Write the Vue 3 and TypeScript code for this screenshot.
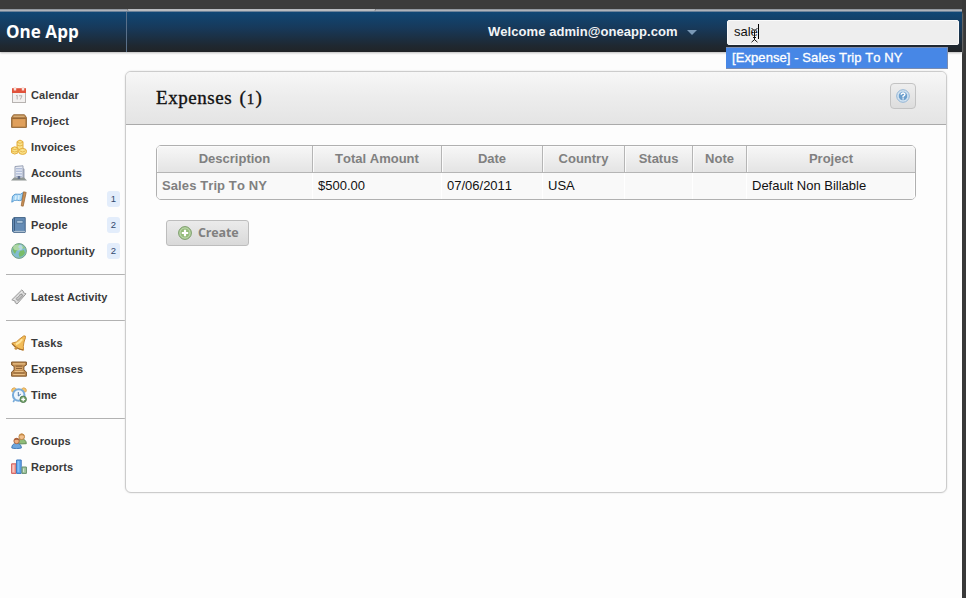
<script setup lang="ts">
import { ref } from 'vue'

interface NavItem {
  label: string
  icon: string
  count?: number
}

interface Column {
  label: string
  value: string
  width: number
}

const groups: NavItem[][] = [
  [
    { label: 'Calendar', icon: 'calendar' },
    { label: 'Project', icon: 'project' },
    { label: 'Invoices', icon: 'invoices' },
    { label: 'Accounts', icon: 'accounts' },
    { label: 'Milestones', icon: 'milestones', count: 1 },
    { label: 'People', icon: 'people', count: 2 },
    { label: 'Opportunity', icon: 'opportunity', count: 2 },
  ],
  [{ label: 'Latest Activity', icon: 'activity' }],
  [
    { label: 'Tasks', icon: 'tasks' },
    { label: 'Expenses', icon: 'expenses' },
    { label: 'Time', icon: 'time' },
  ],
  [
    { label: 'Groups', icon: 'groups' },
    { label: 'Reports', icon: 'reports' },
  ],
]

const columns: Column[] = [
  { label: 'Description', value: 'Sales Trip To NY', width: 156 },
  { label: 'Total Amount', value: '$500.00', width: 129 },
  { label: 'Date', value: '07/06/2011', width: 101 },
  { label: 'Country', value: 'USA', width: 82 },
  { label: 'Status', value: '', width: 68 },
  { label: 'Note', value: '', width: 54 },
  { label: 'Project', value: 'Default Non Billable', width: 168 },
]

const query = ref('sale')
</script>

<template>
  <div class="screen">
    <div class="chrome"></div>
    <div class="window">
      <div class="toolbar-edge"><span class="edge-tab"></span></div>
      <header class="topbar">
        <div class="brand">One App</div>
        <div class="account">
          <span>Welcome admin@oneapp.com</span>
          <span class="arrow"></span>
        </div>
        <div class="search">
          <div class="field">
            <span>{{ query }}</span><span class="caret"></span>
            <svg class="ibeam" width="9" height="16" viewBox="0 0 9 16" fill="none">
              <path d="M1.5 1L4.5 4L7.5 1M4.5 4V13M1.5 15.2L4.5 12.6L7.5 15.2M3 10.5H6" stroke="#fff" stroke-width="2" opacity=".6" />
              <path d="M1.5 1L4.5 4L7.5 1M4.5 4V13M1.5 15.2L4.5 12.6L7.5 15.2M3 10.5H6" stroke="#111" />
            </svg>
          </div>
          <div class="suggestion">[Expense] - Sales Trip To NY</div>
        </div>
      </header>

      <div class="body">
        <nav class="sidebar">
          <ul v-for="(group, g) in groups" :key="g" class="group">
            <li v-for="item in group" :key="item.label" class="item">
              <svg class="icon" width="16" height="16" viewBox="0 0 16 16">
                <g v-if="item.icon === 'calendar'">
                  <rect x="1.5" y="2.5" width="13" height="13" fill="#f3f1f0" stroke="#b7b3b1" />
                  <path d="M1 1.2H15V6H1Z" fill="#e0523c" />
                  <path d="M4 0V3.4M12 0V3.4" stroke="#f9e3dc" stroke-width="2.4" />
                  <path d="M5 8.8L6.2 8.3V12.5M8 8.8H11L9.3 12.5" fill="none" stroke="#b5b1b1" />
                </g>
                <g v-else-if="item.icon === 'project'">
                  <path d="M.6 4.5L2.5 1.8H13.5L15.4 4.5V14.4H.6Z" fill="#c18a4c" stroke="#94683a" />
                  <path d="M1.2 5.2H14.8" stroke="#85592e" />
                  <path d="M2 6.2H14V13.4H2Z" fill="#e0a05c" />
                  <path d="M2.5 3.4H13.5" stroke="#d5ad78" stroke-width="1.4" />
                </g>
                <g v-else-if="item.icon === 'invoices'" fill="#fae28a" stroke="#e2ac3c">
                  <path d="M6 2.6Q9 -.4 12 2.6V11H6Z" />
                  <path d="M6 3.2Q9 5.4 12 3.2M6 6Q9 8 12 6" fill="none" stroke-width=".8" />
                  <path d="M.6 9V13.8Q3.6 16.4 7 13.8V9Q3.8 6.6 .6 9Z" />
                  <path d="M.7 9.6Q3.8 11.6 6.9 9.6M.7 12Q3.8 14 6.9 12" fill="none" stroke-width=".8" />
                  <ellipse cx="11.6" cy="12.4" rx="4" ry="3" />
                  <path d="M9 12Q11.5 14 14.3 12" fill="none" stroke-width=".8" />
                </g>
                <g v-else-if="item.icon === 'accounts'">
                  <path d="M4 1.5L12 .8V14H4Z" fill="#e6eaf3" stroke="#98a1b4" />
                  <path d="M12 3L13.5 4V14H12Z" fill="#9aa2b5" />
                  <path d="M6 3V12M8 3V12M10 3V12" stroke="#7d90bd" stroke-dasharray="1.4 1.2" />
                  <path d="M0 15.4L3 12.5H13L16 15.4Z" fill="#8f9693" />
                  <path d="M6.7 11H9.2V14H6.7Z" fill="#64718c" />
                </g>
                <g v-else-if="item.icon === 'milestones'">
                  <path d="M1.5 5.2Q4 2.2 6.6 3.2T12.2 1.6L10.6 9.2Q8.5 10 6.2 9.2T.8 11.2Z" fill="#a4d4f4" stroke="#5a9cd2" />
                  <path d="M5 4.6L4.3 8.8M8 4.2L7.5 8.6" stroke="#d9effc" stroke-width="1.5" />
                  <path d="M12.6 .8L15.2 1.4L12.2 15.2L10.2 14.8Z" fill="#c99157" stroke="#94602f" stroke-width=".7" />
                </g>
                <g v-else-if="item.icon === 'people'">
                  <path d="M1.5 2L3 .6H14.2V15.3H2.5L1.5 14.2Z" fill="#658cb5" stroke="#446587" />
                  <path d="M3.5 1V15" stroke="#3d5d80" />
                  <path d="M5.7 3.4H12V6.3H5.7Z" fill="#a9c2d8" stroke="#456a91" stroke-width=".7" />
                  <path d="M3 14.4H14" stroke="#b5c6d6" />
                </g>
                <g v-else-if="item.icon === 'opportunity'">
                  <circle cx="8" cy="8" r="7.4" fill="#82bdd0" stroke="#74a183" />
                  <path d="M2 4Q5 0 9 1.4L7 4L9 6L5.4 8L4 11Q1 8 2 4ZM9 8L13 7L14 10Q12 14 8.5 14L7.6 11Z" fill="#78bd68" />
                  <path d="M10.5 2L14 5L11.5 6Z" fill="#90ca7b" />
                  <ellipse cx="7" cy="4.4" rx="4.8" ry="3" fill="#fff" opacity=".4" />
                </g>
                <g v-else-if="item.icon === 'activity'">
                  <path d="M.8 10.8L10.8 .9L12.3 2.2L12.5 3.7L15 4.8L6 15L4.2 13.7L4 12Z" fill="#dadada" stroke="#9a9a9a" />
                  <path d="M5 9.6L9.8 4.8L12 6.4L7 11.6Z" fill="#c2c2c2" stroke="#8f8f8f" />
                  <path d="M3.1 10.8L11 3" stroke="#f8f8f8" stroke-dasharray="1 1" />
                </g>
                <g v-else-if="item.icon === 'tasks'">
                  <path d="M.8 8.2Q6.2 7.7 8.4 4.2L12.6 1Q14.9 .2 14.5 2.5L13 7Q11.8 11.5 12.6 15.2Q5.5 13.9 .8 8.2Z" fill="#f2bc58" stroke="#c98b35" />
                  <path d="M1.2 8.8Q5.4 14.1 12 14.8" fill="none" stroke="#a5702f" stroke-width="1.2" />
                  <path d="M5 9.2Q9 7.6 11.2 4.2" fill="none" stroke="#ffe59b" stroke-width="2" />
                  <circle cx="5" cy="13.2" r="1.5" fill="#c9913f" />
                </g>
                <g v-else-if="item.icon === 'expenses'">
                  <path d="M.6 1H15.4V4L12.9 5.5V9L15.4 11V15.2H.6V11L3.1 9V5.5L.6 4Z" fill="#bf8c51" stroke="#835a2f" />
                  <path d="M2 2.8H14M3.5 10.6H12.5M2.2 13.4H13.8" stroke="#e9bf85" stroke-width="1.3" />
                  <path d="M4.3 5H11.7V9H4.3Z" fill="#dcab6e" />
                  <path d="M4.6 5.2H11.4M5 7.4H11M2.4 12H13.6" stroke="#845a30" />
                </g>
                <g v-else-if="item.icon === 'time'">
                  <path d="M.8 4.5Q0 1 3.6 .8L5.5 2L2.5 5.2ZM10.4 2L12.4 .8Q16 1 15.2 4.5L13.5 5.2Z" fill="#f5c66f" stroke="#d29a46" stroke-width=".7" />
                  <circle cx="7.7" cy="8" r="5.8" fill="#eef5fc" stroke="#78abda" stroke-width="2" />
                  <path d="M7.3 5V9L9.8 7.2" fill="none" stroke="#4d7aab" />
                  <path d="M3.4 13L2.2 15" stroke="#78abda" stroke-width="1.6" />
                  <circle cx="12.2" cy="12.3" r="3.2" fill="#76a56a" stroke="#557f55" />
                  <path d="M10.3 12.3H14.1M12.2 10.4V14.2" stroke="#fff" stroke-width="1.3" />
                </g>
                <g v-else-if="item.icon === 'groups'">
                  <path d="M6 11Q6 6.2 10.7 6.2Q15.2 6.2 15.3 10.7Z" fill="#90bd78" stroke="#658f5c" />
                  <circle cx="10.7" cy="3.8" r="2.8" fill="#f2c08c" stroke="#c08648" />
                  <path d="M8 3Q8.5 .5 11 .6T13.5 3Q11 1.6 8 3Z" fill="#c58c48" />
                  <path d="M.8 15Q.8 10.4 5.5 10.4T10.4 15Q5 16.5 .8 15Z" fill="#6ea7de" stroke="#477db8" />
                  <circle cx="5.6" cy="8" r="2.7" fill="#efb183" stroke="#b06a45" />
                  <path d="M3 7.4Q3.3 5 5.7 5T8.3 7.4Q5.8 6.1 3 7.4Z" fill="#a9623c" />
                </g>
                <g v-else>
                  <path d="M.6 4.8H5V14.4H.6Z" fill="#f2a7a0" stroke="#d15f5c" />
                  <path d="M5.6 1H10.2V14.4H5.6Z" fill="#64abee" stroke="#3a74bd" />
                  <path d="M11 8H15.4V14.4H11Z" fill="#a3c7a0" stroke="#678f6c" />
                  <path d="M7.2 2V13" stroke="#8fc9ff" />
                  <path d="M2.2 6V13M12.5 9.5V13" stroke="#fff" opacity=".5" />
                </g>
              </svg>
              <span class="label">{{ item.label }}</span>
              <span v-if="item.count" class="count">{{ item.count }}</span>
            </li>
          </ul>
        </nav>

        <main class="panel">
          <div class="panel-head">
            <h1>Expenses <span class="total">(<span class="digit">1</span>)</span></h1>
            <button class="help" type="button" aria-label="Help">
              <svg width="14" height="14" viewBox="0 0 14 14">
                <circle cx="7" cy="7" r="6.3" fill="#d3e3f1" stroke="#93b5d5" />
                <circle cx="7" cy="7" r="4.7" fill="#6c9fcd" stroke="#e9f3fa" stroke-width=".6" />
                <path d="M5.2 5.8Q5.2 4 7.1 4T8.9 5.6Q8.9 6.6 7.1 7.3V8.4M7.1 9.2V10.5" fill="none" stroke="#fff" stroke-width="1.4" />
              </svg>
            </button>
          </div>
          <div class="content">
            <div class="frame">
              <table>
                <colgroup>
                  <col v-for="c in columns" :key="c.label" :style="{ width: c.width + 'px' }" />
                </colgroup>
                <thead>
                  <tr><th v-for="c in columns" :key="c.label">{{ c.label }}</th></tr>
                </thead>
                <tbody>
                  <tr><td v-for="c in columns" :key="c.label">{{ c.value }}</td></tr>
                </tbody>
              </table>
            </div>
            <button class="create" type="button">
              <svg width="14" height="14" viewBox="0 0 14 14">
                <circle cx="7" cy="7" r="6.4" fill="#a5c78e" stroke="#7c9d6c" />
                <circle cx="7" cy="7" r="5" fill="#93bb79" stroke="#cfe2c1" stroke-width=".7" />
                <path d="M3.8 7H10.2M7 3.8V10.2" stroke="#fff" stroke-width="2.2" />
              </svg>
              <span>Create</span>
            </button>
          </div>
        </main>
      </div>
    </div>
  </div>
</template>

<style>
body {
  margin: 0;
  overflow: hidden;
}
</style>

<style scoped>
.screen {
  box-sizing: border-box;
  width: 966px;
  height: 598px;
  padding-right: 4px;
  background: #393939;
  font-family: "Liberation Sans", Arial, sans-serif;
  font-kerning: none;
}
.chrome {
  height: 9px;
  background: #3c3c3c;
}
.window {
  box-sizing: border-box;
  width: 962px;
  height: 589px;
  background: #fdfdfd;
  display: flex;
  flex-direction: column;
}
.toolbar-edge {
  height: 3px;
  box-sizing: border-box;
  padding-left: 127px;
  background: linear-gradient(#9298a0 0 1px, #afb3ba 1px 2px, #677f98 2px);
}
.edge-tab {
  display: block;
  box-sizing: border-box;
  width: 249px;
  height: 2px;
  background: #b9bcc0;
  border: solid #777;
  border-width: 0 1px;
  border-radius: 0 0 3px 3px;
}
.topbar {
  flex: none;
  height: 40px;
  display: flex;
  background: linear-gradient(#104775, #17395a 40%, #1f2831 84%, #212427);
  box-shadow: 0 1px 2px #bbb;
  position: relative;
}
.brand {
  box-sizing: border-box;
  width: 127px;
  padding-left: 6px;
  border-right: 1px solid #59708a;
  font: bold 17px/40px "Open Sans", "Noto Sans", sans-serif;
  letter-spacing: 0.05px;
  color: #fff;
}
.account {
  width: 599px;
  padding: 0 0 2px 361px;
  box-sizing: border-box;
  display: flex;
  align-items: center;
  gap: 9px;
  font-size: 13px;
  font-weight: bold;
  color: #f2f4f6;
  letter-spacing: 0.06px;
}
.arrow {
  border: 5px solid transparent;
  border-top-color: #7a98b5;
  border-bottom: 0;
  margin-top: 2px;
}
.search {
  padding: 8px 0 0 1px;
  position: relative;
}
.field {
  position: relative;
  box-sizing: border-box;
  width: 232px;
  height: 25px;
  border: 1px solid #fafafa;
  border-radius: 2px;
  background: #eee;
  padding-left: 6px;
  display: flex;
  align-items: center;
  font-size: 13px;
  color: #111;
}
.field > span:first-child {
  margin-top: -2px;
}
.caret {
  width: 1px;
  height: 15px;
  background: #000;
  margin-top: -2px;
}
.ibeam {
  position: absolute;
  left: 22px;
  top: 6px;
}
.suggestion {
  position: absolute;
  z-index: 2;
  left: 0;
  top: 35px;
  box-sizing: border-box;
  width: 222px;
  height: 22px;
  border: 1px solid #7b8db0;
  border-left: 0;
  background: #4787e6;
  padding-left: 6px;
  font-size: 13px;
  line-height: 20px;
  letter-spacing: 0.08px;
  color: #fff;
  -webkit-text-stroke: 0.3px #fff;
}
.body {
  flex: 1;
  display: flex;
  align-items: flex-start;
}
.sidebar {
  box-sizing: border-box;
  width: 125px;
  padding: 30px 0 0 6px;
}
.group {
  list-style: none;
  margin: 0;
  padding: 0;
}
.group + .group {
  border-top: 1px solid #b2b2b2;
  margin-top: 10px;
  padding-top: 9px;
}
.item {
  height: 26px;
  padding: 0 5px 0 5px;
  display: flex;
  align-items: center;
}
.icon {
  flex: none;
}
.label {
  margin-left: 4px;
  font-size: 11px;
  font-weight: bold;
  letter-spacing: 0.09px;
  color: #3a3a3a;
}
.count {
  margin-left: auto;
  width: 13px;
  height: 16px;
  border-radius: 3px;
  background: #e3edfb;
  font-size: 9.5px;
  line-height: 16px;
  text-align: center;
  color: #33496d;
}
.panel {
  box-sizing: border-box;
  width: 822px;
  height: 422px;
  margin-top: 19px;
  border: 1px solid #ccc;
  border-radius: 6px;
  background: #fdfdfd;
  box-shadow: 0 0 2px #ddd;
}
.panel-head {
  box-sizing: border-box;
  height: 53px;
  padding: 0 30px;
  display: flex;
  justify-content: space-between;
  border-bottom: 1px solid #aaa;
  border-radius: 5px 5px 0 0;
  background: linear-gradient(#f7f7f7, #ededed 45%, #e4e4e4);
}
h1 {
  margin: 0;
  font: normal 19px/51px "Liberation Serif", Georgia, serif;
  letter-spacing: 0.55px;
  color: #111;
  -webkit-text-stroke: 0.35px #111;
}
.total {
  margin-left: 2px;
}
.digit {
  font-size: 15px;
  margin: 0 0.5px;
}
.help {
  width: 26px;
  height: 26px;
  margin-top: 11px;
  padding: 0;
  border: 1px solid #c3c3c3;
  border-radius: 4px;
  background: linear-gradient(#eee, #ddd);
  display: flex;
  align-items: center;
  justify-content: center;
}
.content {
  padding: 20px 30px;
}
.frame {
  box-sizing: border-box;
  width: 760px;
  height: 55px;
  border: 1px solid #b0b0b0;
  border-radius: 5px;
  overflow: hidden;
}
table {
  width: 758px;
  table-layout: fixed;
  border-collapse: separate;
  border-spacing: 0;
  font-size: 13px;
}
th {
  box-sizing: border-box;
  height: 27px;
  padding: 0 0 1px;
  border-right: 1px solid #b5b5b5;
  border-bottom: 1px solid #b5b5b5;
  background: linear-gradient(#f7f7f7, #e4e4e4);
  box-shadow: inset 1px 1px #fbfbfb;
  color: #808080;
}
th:last-child {
  border-right: 0;
}
td {
  box-sizing: border-box;
  height: 26px;
  padding: 0 0 1px 5px;
  border-right: 1px solid #fff;
  background: #f9f9f9;
  color: #111;
  white-space: nowrap;
}
td:first-child {
  font-weight: bold;
  color: #808080;
  letter-spacing: 0.1px;
}
.create {
  box-sizing: border-box;
  width: 83px;
  height: 26px;
  margin: 20px 0 0 10px;
  padding: 0 0 0 11px;
  border: 1px solid #bdbdbd;
  border-radius: 3px;
  background: linear-gradient(#ebebeb, #d9d9d9);
  display: flex;
  align-items: center;
  gap: 6px;
  font: bold 12.5px "Open Sans", "Noto Sans", sans-serif;
  letter-spacing: -0.15px;
  color: #808080;
}
.create span {
  margin-top: -2px;
}
</style>
